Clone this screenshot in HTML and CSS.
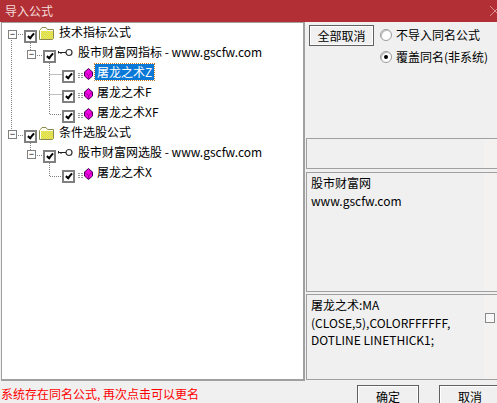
FILE: index.html
```html
<!DOCTYPE html>
<html lang="zh">
<head>
  <meta charset="UTF-8">
  <title>导入公式</title>
  <link rel="stylesheet" href="styles.css">
</head>
<body>
  <svg class="defs" width="0" height="0">
    <defs>
      <pattern id="dither" width="2" height="2" patternUnits="userSpaceOnUse">
        <rect width="2" height="2" fill="#ffff00"/>
        <rect width="1" height="1" fill="#c8c8a0"/>
        <rect x="1" y="1" width="1" height="1" fill="#c8c8a0"/>
      </pattern>
      <symbol id="folder" viewBox="0 0 15 14">
        <path d="M1.5 3.5L3 1.5H7L8.5 3.5H14.5V12.5H13.5V13.5H0.5V4.5Z" fill="#fffff0" stroke="#8a8a50"/>
        <rect x="2" y="5" width="12" height="8" fill="url(#dither)"/>
      </symbol>
      <symbol id="key" viewBox="0 0 15 9">
        <circle cx="11" cy="4.5" r="3" fill="#fff" stroke="#333" stroke-width="1.2"/>
        <path d="M0.5 3V5.5M0.5 4.5H8M3 4.5V6" stroke="#222" fill="none"/>
      </symbol>
      <symbol id="gem" viewBox="0 0 15 12">
        <path d="M0 5.5H6M0 7.5H6M0 9.5H6" stroke="#9a9a9a" stroke-dasharray="2 1"/>
        <path d="M10.5 0.5L14.5 4V8L10.5 11.5L6.5 8V4Z" fill="#f000e0" stroke="#400050"/>
        <path d="M6.5 4L10.5 7.5L14.5 4M10.5 7.5V11" stroke="#a000a0" fill="none"/>
      </symbol>
    </defs>
  </svg>
  <div class="window">
    <div class="titlebar">
      <span>导入公式</span>
      <svg class="close" width="10" height="10" viewBox="0 0 10 10"><path d="M0 0L10 10M10 0L0 10" stroke="#d98d90" fill="none"/></svg>
    </div>
    <div class="main">
      <div class="tree">
        <!-- 连接线 -->
        <svg class="lines" width="120" height="170" viewBox="0 0 120 170">
          <g stroke="#808080" stroke-dasharray="1 1" fill="none">
            <path d="M10.5 15V110"/>
            <path d="M15 11.5H23"/>
            <path d="M29.5 20V27"/>
            <path d="M34 32.5H42"/>
            <path d="M48.5 40V91.5H61"/>
            <path d="M48.5 51.5H61"/>
            <path d="M48.5 71.5H61"/>
            <path d="M15 112.5H23"/>
            <path d="M29.5 120V127"/>
            <path d="M34 132.5H42"/>
            <path d="M48.5 140V153.5H61"/>
          </g>
        </svg>
        <div class="row">
          <span class="expander">−</span>
          <span class="check"></span>
          <svg class="icon folder"><use href="#folder"/></svg>
          <span class="label">技术指标公式</span>
        </div>
        <div class="row level1">
          <span class="expander">−</span>
          <span class="check"></span>
          <svg class="icon key"><use href="#key"/></svg>
          <span class="label">股市财富网指标 - www.gscfw.com</span>
        </div>
        <div class="row level2">
          <span class="check"></span>
          <svg class="icon gem"><use href="#gem"/></svg>
          <span class="label selected">屠龙之术Z</span>
        </div>
        <div class="row level2">
          <span class="check"></span>
          <svg class="icon gem"><use href="#gem"/></svg>
          <span class="label">屠龙之术F</span>
        </div>
        <div class="row level2">
          <span class="check"></span>
          <svg class="icon gem"><use href="#gem"/></svg>
          <span class="label">屠龙之术XF</span>
        </div>
        <div class="row">
          <span class="expander">−</span>
          <span class="check"></span>
          <svg class="icon folder"><use href="#folder"/></svg>
          <span class="label">条件选股公式</span>
        </div>
        <div class="row level1">
          <span class="expander">−</span>
          <span class="check"></span>
          <svg class="icon key"><use href="#key"/></svg>
          <span class="label">股市财富网选股 - www.gscfw.com</span>
        </div>
        <div class="row level2">
          <span class="check"></span>
          <svg class="icon gem"><use href="#gem"/></svg>
          <span class="label">屠龙之术X</span>
        </div>
      </div>
      <div class="side">
        <div class="options">
          <button class="btn cancel-all">全部取消</button>
          <div class="radios">
            <div class="radio-row"><span class="radio"></span>不导入同名公式</div>
            <div class="radio-row"><span class="radio on"></span>覆盖同名(非系统)</div>
          </div>
        </div>
        <div class="panel blank"></div>
        <div class="panel info">
          <div class="panel-text">股市财富网<br>www.gscfw.com</div>
        </div>
        <div class="panel code">
          <div class="panel-text">屠龙之术:MA<br>(CLOSE,5),COLORFFFFFF,<br>DOTLINE LINETHICK1;</div>
          <span class="small-check"></span>
        </div>
      </div>
    </div>
    <div class="footer">
      <span class="status">系统存在同名公式, 再次点击可以更名</span>
      <button class="btn ok">确定</button>
      <button class="btn cancel">取消</button>
    </div>
  </div>
</body>
</html>
```

FILE: styles.css
```css
html, body {
  margin: 0;
  padding: 0;
}
body {
  width: 497px;
  height: 403px;
  overflow: hidden;
  background: #f0f0f0;
  font-family: "Noto Sans CJK SC", "Liberation Sans", sans-serif;
  font-size: 12px;
  color: #000;
}
.defs {
  display: block;
  height: 0;
}
.window {
  display: flex;
  flex-direction: column;
  height: 403px;
}
.titlebar {
  height: 22px;
  flex: none;
  background: #b23035;
  color: #f4dcdc;
  display: flex;
  align-items: center;
  justify-content: space-between;
  padding: 0 0 1px 5px;
  box-sizing: border-box;
  line-height: 16px;
}
.close {
  margin-right: -3px;
}
.main {
  display: flex;
  height: 359px;
  flex: none;
}
.tree {
  position: relative;
  width: 304px;
  margin-left: 1px;
  box-sizing: border-box;
  background: #fff;
  border: 1px solid #a0a0a0;
  border-width: 1px 2px 2px 1px;
}
.lines {
  position: absolute;
  left: -1px;
  top: 0;
}
.row {
  position: relative;
  height: 20px;
  display: flex;
  align-items: center;
  padding-left: 22px;
}
.row.level1 {
  padding-left: 41px;
}
.row.level2 {
  padding-left: 60px;
}
.expander {
  position: absolute;
  margin-left: -16px;
  margin-top: 2px;
  width: 9px;
  height: 9px;
  box-sizing: border-box;
  border: 1px solid #808080;
  background: #fff;
  font-size: 9px;
  line-height: 7px;
  text-align: center;
  color: #000;
  font-family: "Liberation Sans", sans-serif;
}
.check {
  position: relative;
  width: 13px;
  height: 13px;
  flex: none;
  box-sizing: border-box;
  margin-top: 6px;
  border: 2px solid #808080;
  background: #fff;
}
.check::after {
  content: "";
  position: absolute;
  left: 2.5px;
  top: 0;
  width: 2px;
  height: 5px;
  border: solid #000;
  border-width: 0 2px 2px 0;
  transform: rotate(40deg);
}
.icon {
  flex: none;
}
.folder {
  width: 15px;
  height: 14px;
  margin: -1px 0 0 2px;
}
.key {
  width: 15px;
  height: 9px;
  margin: -1px 0 0 2px;
}
.gem {
  width: 15px;
  height: 12px;
  margin: 1px 0 0 3px;
}
.label {
  margin-left: 2px;
  padding: 0 2px;
  line-height: 16px;
  white-space: nowrap;
  transform: translateY(-1px);
}
.folder + .label {
  margin-left: 3px;
}
.key + .label {
  margin-left: 3px;
}
.selected {
  background: #0a78d7;
  color: #fff;
  outline: 1px dotted #c87a20;
}
.side {
  flex: 1;
  margin-left: 1px;
  min-width: 0;
}
.options {
  display: flex;
  height: 116px;
  padding: 3px 0 0 3px;
  box-sizing: border-box;
}
.btn {
  font: inherit;
  color: #000;
  background: #f0f0f0;
  border: 1px solid #606060;
  border-radius: 0;
  padding: 0;
  box-shadow: inset 0 0 0 1px #fff;
}
.cancel-all {
  width: 65px;
  height: 21px;
  line-height: 17px;
}
.radios {
  margin-left: 6px;
}
.radio-row {
  height: 21px;
  display: flex;
  align-items: center;
  white-space: nowrap;
  margin-bottom: 1px;
  margin-top: -1px;
}
.radio-row + .radio-row {
  margin-top: 0;
}
.radio {
  width: 10px;
  height: 10px;
  flex: none;
  border: 1px solid #9a9a9a;
  border-radius: 50%;
  background: #fff;
  box-shadow: inset 1px 1px 0 #c0c0c0;
  margin-right: 4px;
  display: flex;
  align-items: center;
  justify-content: center;
}
.radio.on::after {
  content: "";
  width: 4px;
  height: 4px;
  border-radius: 50%;
  background: #000;
}
.panel {
  position: relative;
  border: 1px solid #a0a0a0;
  border-right: none;
  box-sizing: border-box;
  background: linear-gradient(to right, #f0f0f0 177px, #f3f2f1 177px);
}
.panel.blank {
  height: 31px;
  margin-bottom: 3px;
}
.panel.info {
  height: 120px;
  margin-bottom: 2px;
}
.panel.code {
  height: 86px;
}
.panel-text {
  padding: 1px 0 0 4px;
  line-height: 17.5px;
  white-space: nowrap;
}
.small-check {
  position: absolute;
  left: 178px;
  top: 18px;
  width: 8px;
  height: 8px;
  border: 1px solid #8a8a8a;
  background: #f8f8f8;
}
.footer {
  flex: 1;
  display: flex;
  align-items: flex-start;
}
.status {
  color: #ff0000;
  line-height: 16px;
  margin: 5px 0 0 1px;
  width: 356px;
  flex: none;
}
.ok, .cancel {
  height: 22px;
  margin-top: 4px;
  flex: none;
}
.ok {
  width: 62px;
  margin-right: 20px;
}
.cancel {
  width: 62px;
}
```
